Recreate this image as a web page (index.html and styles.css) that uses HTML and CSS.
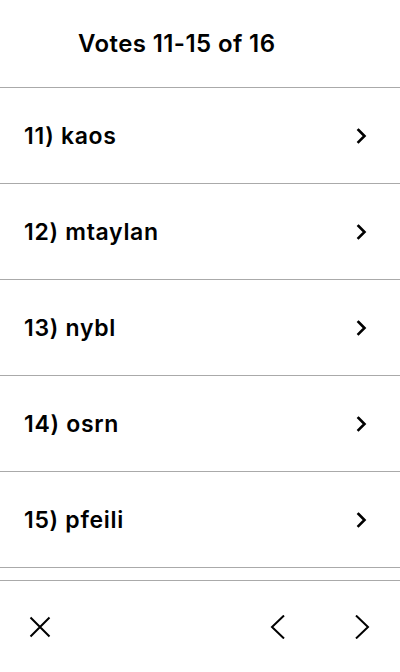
FILE: index.html
```html
<!DOCTYPE html>
<html lang="en">
<head>
<meta charset="utf-8">
<title>Votes</title>
<link rel="stylesheet" href="styles.css">
</head>
<body>
<div class="screen">
  <header class="header">
    <h1 class="title">Votes 11-15 of 16</h1>
  </header>
  <ul class="list">
    <li class="row"><span class="label">11) kaos</span><svg class="chev" viewBox="0 0 24 24"><path d="M9.5 6 L15.5 12 L9.5 18"/></svg></li>
    <li class="row"><span class="label">12) mtaylan</span><svg class="chev" viewBox="0 0 24 24"><path d="M9.5 6 L15.5 12 L9.5 18"/></svg></li>
    <li class="row"><span class="label">13) nybl</span><svg class="chev" viewBox="0 0 24 24"><path d="M9.5 6 L15.5 12 L9.5 18"/></svg></li>
    <li class="row"><span class="label">14) osrn</span><svg class="chev" viewBox="0 0 24 24"><path d="M9.5 6 L15.5 12 L9.5 18"/></svg></li>
    <li class="row"><span class="label">15) pfeili</span><svg class="chev" viewBox="0 0 24 24"><path d="M9.5 6 L15.5 12 L9.5 18"/></svg></li>
  </ul>
  <footer class="footer">
    <svg class="ficon" viewBox="0 0 24 24"><path d="M2.5 2.5 L21.5 21.5 M21.5 2.5 L2.5 21.5"/></svg>
    <div class="nav">
      <svg class="ficon" viewBox="0 0 24 24"><path d="M18 0.5 L6 12 L18 23.5"/></svg>
      <svg class="ficon" viewBox="0 0 24 24"><path d="M7 0.5 L19 12 L7 23.5"/></svg>
    </div>
  </footer>
</div>
</body>
</html>
```
FILE: styles.css
```css
* { box-sizing: border-box; }
html, body { margin: 0; padding: 0; background: #fff; }
body {
  font-family: Inter, "Noto Sans", "DejaVu Sans", sans-serif;
  color: #000;
}
.screen {
  width: 400px;
  height: 672px;
  display: flex;
  flex-direction: column;
}
.header {
  height: 88px;
  border-bottom: 1px solid #aaa;
  display: flex;
  align-items: center;
  padding-left: 78px;
  padding-top: 1px;
}
.title {
  margin: 0;
  font-size: 24px;
  font-weight: 600;
  letter-spacing: 0.4px;
  line-height: 1;
}
.list {
  list-style: none;
  margin: 0;
  padding: 0;
}
.row {
  height: 96px;
  border-bottom: 1px solid #aaa;
  display: flex;
  align-items: center;
  justify-content: space-between;
  padding: 0 27px 0 24px;
}
.label {
  font-size: 23px;
  font-weight: 600;
  letter-spacing: 0.7px;
}
.chev {
  width: 24px;
  height: 24px;
  fill: none;
  stroke: #000;
  stroke-width: 2.6;
  stroke-linecap: square;
  stroke-linejoin: miter;
}
.footer {
  margin-top: 12px;
  border-top: 1px solid #aaa;
  flex: 1;
  display: flex;
  align-items: center;
  justify-content: space-between;
  padding: 0 27px 0 28px;
}
.nav {
  display: flex;
  gap: 59px;
}
.ficon {
  width: 24px;
  height: 24px;
  fill: none;
  stroke: #000;
  stroke-width: 2;
  stroke-linecap: butt;
}
```
